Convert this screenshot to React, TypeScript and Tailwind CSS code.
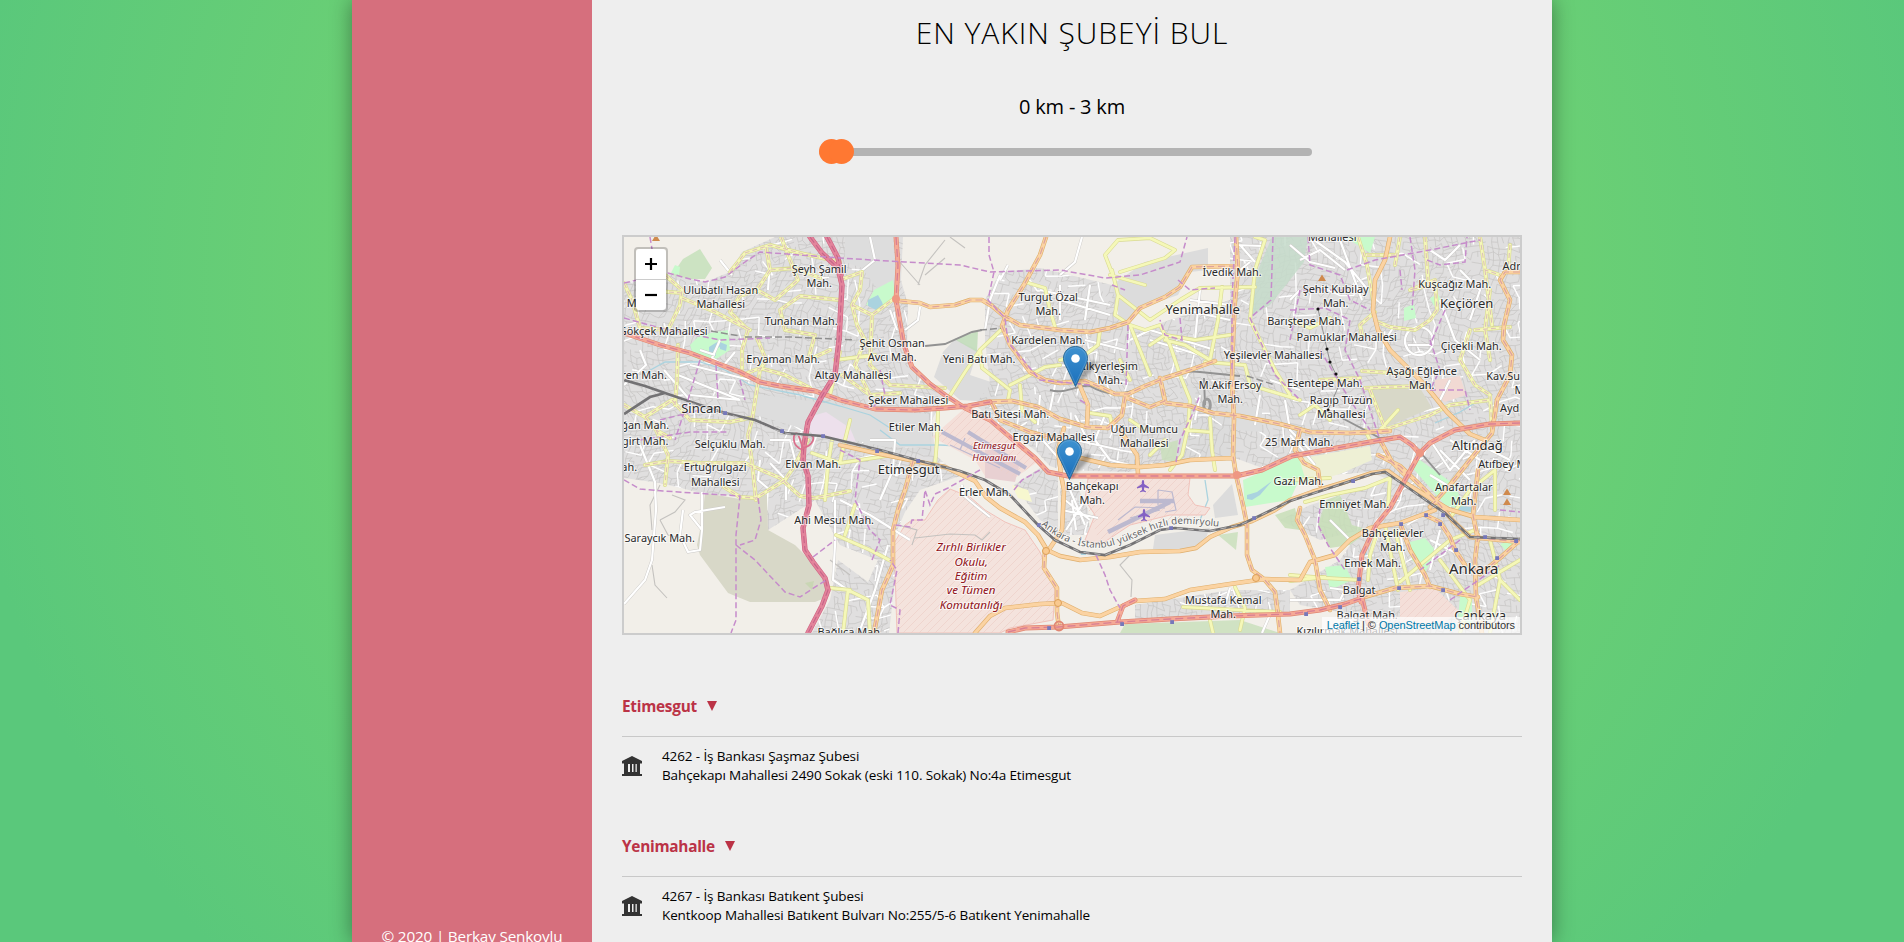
import React from "react";

type Label = [text: string, x: number, y: number, size?: number];

const labels: Label[] = [
  ["Şeyh Şamil", 820, 273], ["Mah.", 820, 287],
  ["Ulubatlı Hasan", 721.5, 294], ["Mahallesi", 721.5, 308],
  ["Tunahan Mah.", 802, 325], ["Gökçek Mahallesi", 664, 334.5],
  ["Eryaman Mah.", 784, 362.5], ["Altay Mahallesi", 854, 379],
  ["t Mah.", 637, 307], ["ren Mah.", 645, 378.5],
  ["Sincan", 702, 412.5, 13], ["ğan Mah.", 646, 428.5],
  ["girt Mah.", 646, 445], ["ah.", 630, 470.5],
  ["Selçuklu Mah.", 731, 448], ["Ertuğrulgazi", 716, 471], ["Mahallesi", 716, 485.5],
  ["Elvan Mah.", 814, 467.5], ["Ahi Mesut Mah.", 835, 524], ["Saraycık Mah.", 660.5, 541.5],
  ["Bağlıca Mah.", 851, 636],
  ["Şehit Osman", 893, 347], ["Avcı Mah.", 893, 361],
  ["Yeni Batı Mah.", 980, 363], ["Şeker Mahallesi", 909, 404],
  ["Etiler Mah.", 917, 431], ["Batı Sitesi Mah.", 1011, 417.5],
  ["Turgut Özal", 1049, 301], ["Mah.", 1049, 315],
  ["Kardelen Mah.", 1049, 344], ["Ergazi Mahallesi", 1054.5, 440.5],
  ["Erler Mah.", 986, 496], ["Etimesgut", 909.5, 474, 13],
  ["İvedik Mah.", 1233, 275.5], ["Yenimahalle", 1203.5, 313.5, 13],
  ["İlkyerleşim", 1111, 370], ["Mah.", 1111, 384],
  ["M.Akif Ersoy", 1231, 388.5], ["Mah.", 1231, 402.5],
  ["Uğur Mumcu", 1145, 432.5], ["Mahallesi", 1145, 446.5],
  ["25 Mart Mah.", 1300, 445.5], ["Bahçekapı", 1093, 489.5], ["Mah.", 1093, 503.5],
  ["Gazi Mah.", 1299.5, 484.5], ["Mustafa Kemal", 1224, 604], ["Mah.", 1224, 618],
  ["Mahallesi", 1333, 241], ["Şehit Kubilay", 1336.5, 293], ["Mah.", 1336.5, 307],
  ["Barıştepe Mah.", 1306.5, 324.5], ["Pamuklar Mahallesi", 1347.5, 340.5],
  ["Yeşilevler Mahallesi", 1274, 358.5], ["Esentepe Mah.", 1325.5, 386.5],
  ["Ragıp Tüzün", 1342, 403.5], ["Mahallesi", 1342, 417.5],
  ["Kuşcağız Mah.", 1455.5, 288], ["Keçiören", 1467.5, 308, 13],
  ["Adnan", 1520, 270], ["Çiçekli Mah.", 1472, 350],
  ["Aşağı Eğlence", 1422.5, 374.5], ["Mah.", 1422.5, 388.5],
  ["Kav.Subayevleri", 1527, 380], ["Mah.", 1528, 394], ["Aydınlık", 1521, 412],
  ["Altındağ", 1478, 449.5, 13], ["Atıfbey Mah.", 1511, 467.5],
  ["Anafartalar", 1464.5, 490.5], ["Mah.", 1464.5, 504.5],
  ["Emniyet Mah.", 1355, 507.5], ["Bahçelievler", 1393.5, 537], ["Mah.", 1393.5, 551],
  ["Emek Mah.", 1373.5, 567], ["Balgat", 1360, 594], ["Ankara", 1474.5, 574, 15],
  ["Balgat Mah.", 1368, 619], ["Çankaya", 1481, 620, 13], ["Kızılırmak Mahallesi", 1348, 635],
];

const redLabels: Label[] = [
  ["Zırhlı Birlikler", 972, 551, 11.6], ["Okulu,", 972, 565.5, 11.6], ["Eğitim", 972, 580, 11.6],
  ["ve Tümen", 972, 594, 11.6], ["Komutanlığı", 972, 608.5, 11.6],
  ["Etimesgut", 995, 449, 9.7], ["Havaalanı", 995, 460.5, 9.7],
];

const urban =
  "M624 283L668 274L705 282L730 272L742 252L775 237L903 237L901 280L908 305L907 345L916 372L945 395L932 420L935 455L960 476L920 490L905 512L893 540L896 570L889 633H812L830 600L838 560L868 582L878 560L840 545L815 500L768 530L766 497L705 494L660 483L624 478Z" +
  "M985 300L1000 272L1040 268L1112 285L1120 320L1140 330L1230 300V237L1270 237L1520 237V633L1345 633L1340 612L1300 605L1290 590L1340 560L1360 530L1320 540L1280 520L1310 505L1390 480L1370 472L1290 478L1235 458L1180 462L1130 472L1062 470L1050 466L1035 450L1000 425L975 405L990 385L985 340Z" +
  "M1060 488H1078L1088 510L1090 535H1062Z M1014 485L1040 468L1058 476L1058 530L1040 520Z M1135 605L1230 590L1290 590V614L1135 620Z";

const motorway = [
  "M810 237L822 253L838 268L842 285L839 340L835 375L822 396L808 422L804 445L803 460L808 476L809 505L803 528L805 550L813 562L825 578L828 590L822 606L808 633",
  "M827 237L838 258L841 275",
];

const trunk = [
  "M624 333L660 345L690 353L740 372L760 382L780 386L815 391L840 400L875 409L915 410L945 408L968 406L990 402",
  "M896 237L898 265L896 300L904 345L912 367L930 384L945 395L965 408L990 420L1010 437L1035 458L1048 472L1068 476H1236L1262 470L1292 456L1370 442L1400 437L1412 445L1420 454",
  "M1520 423L1490 424L1455 430L1430 443L1420 453L1405 480L1390 508L1376 525L1362 555L1358 590L1361 602",
  "M1008 632L1025 628L1058 627L1120 622L1170 619L1230 616L1290 614L1320 610L1345 604L1362 598L1366 615L1371 633",
  "M1117 622L1123 606L1135 600",
];

const primary = [
  "M840 445L880 454L915 461L945 467L975 481L986 497L1000 508L1025 522L1038 535L1047 550L1060 556L1080 560L1110 557L1140 552L1180 551L1196 548L1210 537L1232 527L1252 521L1275 510L1290 500L1312 492L1345 482L1372 473L1388 471L1402 481L1430 498L1448 509L1475 517L1520 520",
  "M1045 550L1044 568L1057 588L1057 612L1059 628",
  "M1064 428L1058 450L1061 475L1064 490L1062 530L1050 548",
  "M975 633L990 616L1005 608L1040 604L1062 603L1082 613L1100 616L1120 607L1135 601L1165 599L1190 590L1230 584L1265 579L1300 580L1310 562L1335 555L1350 540L1370 528L1400 523L1435 510",
  "M1236 237L1238 270L1235 300L1233 340L1232 380L1234 420L1233 455L1236 475L1243 505L1247 525L1247 555L1252 570L1264 579L1275 592L1278 615L1280 633",
  "M1236 266L1192 267L1180 287L1165 297L1140 308L1128 322L1110 328L1090 332L1060 330L1020 325L1004 316L992 306L982 300L970 300L955 305L930 307L920 303L900 301",
  "M1046 237L1040 255L1025 283L1008 310L1002 326L1010 345L1030 372L1045 380L1060 383L1085 381L1100 387L1115 394L1128 394L1145 386L1165 378L1190 370L1215 361",
  "M1080 386L1088 405L1087 425",
  "M1160 378L1165 401L1150 407L1125 397L1122 415L1108 428L1087 427L1060 419L1038 407L1012 401L985 402",
  "M992 403L1000 420L1030 432L1060 440",
  "M1165 403L1190 406L1213 413L1240 416L1280 424L1310 432L1350 433L1390 431",
  "M1060 457L1080 458L1110 465L1140 467L1165 465L1190 460L1232 458M1138 474L1137 455L1120 430",
  "M1390 237L1385 260L1375 280L1373 310L1378 330L1390 350L1410 370L1425 385L1447 412L1470 434L1485 440",
  "M1520 272L1505 272L1500 280L1510 300L1504 325L1503 340L1512 355L1510 375L1497 400L1492 433L1470 460L1450 485L1430 507",
  "M913 461L905 490L898 510L893 530L893 565L882 590L874 633",
  "M1300 508L1297 520L1305 535L1315 560L1320 590L1330 610",
  "M1300 430L1295 450L1304 463L1318 470L1320 485M1378 455L1400 466L1420 485L1440 505L1452 520L1470 537L1520 542",
  "M1400 523L1410 550L1425 575L1430 587M1361 598L1395 588L1430 586L1460 594L1478 597",
  "M1425 515L1440 522L1450 537L1455 550L1465 565M1478 535L1475 560L1476 597L1482 633",
  "M1520 540L1500 558L1480 574M1380 440L1392 462L1405 475M1478 470L1473 515L1478 540",
];

const secondary = [
  "M730 272L745 253L770 245L800 253L840 262M766 247L770 270L795 268L820 278M770 270L757 290L740 296L730 312L748 330M781 237L790 260L798 280L775 300L757 290",
  "M665 275L682 290L680 305L668 330L640 328L632 300L624 283M682 298L715 312L750 330M645 290L682 293",
  "M748 330L742 350L742 375M742 375L760 368L785 375L810 388M757 338L766 360L760 370L752 420L748 435M840 300L800 296L780 310L785 330L815 335L808 360L830 350",
  "M624 405L645 417L656 430L670 438M645 417L672 400L690 420L730 422L750 418M678 345L677 380L675 405M656 430L668 455L665 485",
  "M645 465L668 461L700 463L745 463L780 478L800 496L815 498L850 491M748 435L752 462L756 500M724 487L740 497L756 498L785 480L795 465L808 440",
  "M832 440L828 465L825 500M812 453L840 463L880 457L890 455M840 462L845 440L850 420",
  "M836 535L870 550L893 562M845 535L855 505M848 590L843 633M848 590L868 600L870 633M850 590L830 588",
  "M862 272L860 290L852 305L857 325L865 340L855 365L870 395M852 305L872 315L895 298M872 315L870 365L890 385L945 388M840 280L862 272M842 375L870 395L900 393",
  "M835 360L875 355M840 352L830 395M938 412L937 440L935 465M942 408L965 372L980 350L1003 328M980 350L982 368L1000 382L1010 390L1008 400M1010 385L1030 375L1045 367L1060 365M1020 385L1022 410L1035 422",
  "M1025 282L1045 288L1050 310L1055 327M1060 360L1085 355L1098 345L1100 330",
  "M1112 273L1105 255L1118 240L1150 238L1175 250L1165 258L1120 272M1110 275L1145 285M1112 270L1118 295L1115 315L1130 325L1145 330L1160 325L1170 345L1180 375L1190 400L1188 430M1118 295L1150 320L1180 300L1200 288L1255 287M1130 325L1150 375M1150 345L1165 335L1195 340L1230 335M1130 380L1120 360",
  "M1222 287L1218 320L1210 360L1185 345L1165 340M1205 362L1245 365L1250 385L1300 400M1255 237L1265 240L1255 270L1250 320L1275 370L1290 395",
  "M1290 320L1310 328L1330 318M1210 418L1212 450L1215 470M1190 418L1182 455L1170 470M1185 430L1210 432M1090 413L1110 416L1112 425M1130 420L1145 430M1150 455L1165 440",
  "M1358 237L1367 265L1373 300M1367 255L1395 255M1375 312L1360 325L1362 335M1378 322L1390 327L1415 330L1430 320L1437 310L1435 280L1410 290L1430 285M1425 237L1428 280M1400 237L1395 265",
  "M1480 237L1485 270L1500 275M1485 270L1492 325M1475 330L1510 327M1470 330L1460 360L1475 385L1490 395L1492 430M1490 290L1485 330L1490 360M1510 245L1508 270",
  "M1362 371L1410 374M1370 390L1385 428M1365 388L1420 386M1383 430L1430 415L1450 405L1490 400M1320 380L1360 378",
  "M1300 415L1315 405L1330 420M1365 430L1370 440M1290 480L1330 478M1305 502L1330 495L1365 488L1390 478L1388 508M1380 430L1398 410",
  "M1290 575L1325 578L1360 580M1400 582L1420 565L1450 540L1475 530M1368 580L1370 555L1378 530M1398 590L1385 525M1410 590L1395 530M1440 560L1470 600M1478 585L1520 560M1490 540L1500 580L1520 600M1470 600L1460 633M1500 580L1490 633M1452 515L1470 490L1495 470L1495 510",
  "M1183 607L1240 610L1280 612M1235 587L1245 608L1240 630M1210 620L1213 633M1290 581L1325 577",
];

const white = [
  "M720 340L712 358L724 365L735 352M700 350L715 355M690 365L750 380M678 375L740 400M690 395L740 400M664 370L690 400M640 350L646 365L624 385M720 260L732 275M770 262L768 290M785 245L795 255M640 445L655 482L656 510L652 560L645 580L624 604",
  "M656 510L655 490M683 510L680 535L688 552L700 550L702 530L690 515L695 512L725 507M702 530L702 492M760 460L758 480L770 490M770 440L790 440L795 460M786 500L786 480L770 463",
  "M835 500L835 545L833 580L848 590M840 500L870 515L910 540M870 440L895 440L893 470L880 500M888 545L875 590L860 630",
  "M870 237L875 260L860 272M890 310L897 330M920 307L918 320L905 330M1000 275L990 300L985 330M1008 265L1000 280M1060 285L1060 320M1040 290L1110 305M1060 300L1110 315M1090 285L1085 320M1082 237L1075 262L1060 275",
  "M1085 340L1125 350M1130 340L1150 330L1215 350M1150 340L1200 355M1190 300L1230 305M1185 310L1230 320M1200 290L1195 340M1240 245L1255 262M1240 270L1250 262M1235 245L1262 246",
  "M1105 415L1095 440L1110 460L1130 465M1075 415L1090 445M1075 440L1120 450M1260 395L1255 425M1200 395L1195 420M1285 400L1290 430L1310 450M1290 435L1315 465M1270 380L1300 390",
  "M1440 300L1455 340L1480 360M1395 325L1385 340L1370 338M1405 340A14 14 0 1 0 1433 342A14 14 0 1 0 1405 340M1408 345H1432M1450 380L1440 400M1450 440L1480 460M1440 450L1470 480M1430 475L1455 490M1430 440L1450 470L1475 440",
  "M1330 520L1350 540M1380 530L1365 570M1400 530L1405 565M1430 540L1460 555M1440 530L1430 570M1230 588L1225 605M1272 610L1262 633M1290 600L1340 600L1345 590L1330 588",
  "M962 485L963 495L975 505L990 517M1070 490L1085 525M1065 500L1090 520M1062 510L1098 518M1066 530L1085 500M1072 500L1076 530M1040 437L1060 460M1040 395L1038 425M1055 385L1050 410",
  "M1300 260L1320 250L1345 270M1310 237L1345 262L1368 290M1290 245L1310 262L1335 268M1340 240L1362 300M1300 290L1290 300M1430 250L1445 260L1460 245M1490 450L1510 460M1460 270L1480 290L1470 320",
];

const boundaries = [
  "M624 283L668 273L690 279L705 282L725 277L745 262L760 252L840 258L905 262L960 265L990 272L1060 270L1105 278L1140 275L1180 262L1187 237",
  "M650 237L653 255L660 270M624 318L660 328L720 340L770 338M989 237L989 255L994 272L988 300L1005 318L1008 342L1040 380L1090 385",
  "M624 480L640 489L663 491L740 496L736 535L736 620L731 633M736 545L755 560L785 592L800 597L826 580M758 498L761 520L755 540L740 545M813 557L835 540",
  "M980 470L948 488L935 494L930 505L925 490L922 520L912 520L910 527L895 525M898 633L900 610L890 605L897 570L890 560M1014 490L1022 480L1040 470",
  "M1096 555L1105 575L1110 590L1120 608M1235 237L1232 300L1232 370M1273 237L1271 300L1250 318L1262 345L1275 375L1300 400M1178 280L1190 290L1215 288M1176 462L1180 440L1192 415L1200 395",
  "M1308 237L1310 265L1340 275L1350 300L1370 310M1347 270L1375 260L1430 250L1480 240M1410 237L1415 270L1412 310M1427 260L1440 265L1465 262L1467 237M1290 310L1325 308L1350 320L1345 350L1360 380L1380 440",
  "M1400 270L1402 290M1430 340L1440 370L1430 390L1465 390L1470 410M1345 290L1300 290L1290 340M1320 350L1350 400L1370 430M1445 310L1430 345M1320 508L1318 525L1328 545L1345 570M1460 540L1420 570M1500 510L1520 512M1450 600L1500 565",
  "M1080 400L1088 405M1128 325L1126 385M1112 285L1125 290M1180 318L1182 340L1165 335L1160 320M700 360L688 400L675 440M716 365L718 400M740 380L745 400M660 420L700 410M640 440L690 432L728 432M880 370L885 395L872 408M840 450L860 460L855 500L870 530L880 540L872 560",
];

const orangeDashes = [1, 4, 5, 6, 8, 9, 10, 13, 14, 15, 16, 17, 18, 19];

const stations: [number, number][] = [
  [725, 413], [782, 431], [823, 436], [877, 451], [918, 461], [1039, 525], [1171, 528], [1254, 518],
  [1353, 481], [1401, 524], [1426, 515], [1440, 524], [1443, 515], [1456, 550], [1485, 537], [1497, 558],
  [1516, 541], [1359, 579], [1399, 588], [1443, 590], [1340, 607], [1306, 614], [1122, 624], [1172, 622], [1049, 628],
];

function makeRandom(seed: number) {
  let s = seed;
  return () => {
    s = (s * 16807) % 2147483647;
    return s / 2147483647;
  };
}

/** Irregular street mesh covering a rectangle; some segments are dropped so blocks vary. */
function mesh(seed: number, x0: number, y0: number, x1: number, y1: number, step: number, slant: number, keep: number) {
  const rnd = makeRandom(seed);
  const cols = Math.ceil((x1 - x0) / step) + 1;
  const rows = Math.ceil((y1 - y0) / step) + 1;
  const px: number[][] = [];
  const py: number[][] = [];
  for (let r = 0; r < rows; r++) {
    px.push([]);
    py.push([]);
    for (let c = 0; c < cols; c++) {
      const bend = Math.sin(c * 0.21 + r * 0.13 + seed) * step * 1.2;
      px[r].push(x0 + c * step + (rnd() - 0.5) * step * 0.6 + Math.sin(r * 0.2) * step * slant);
      py[r].push(y0 + r * step + (rnd() - 0.5) * step * 0.6 + bend);
    }
  }
  let d = "";
  for (let r = 0; r < rows - 1; r++) {
    for (let c = 0; c < cols - 1; c++) {
      const from = `M${px[r][c].toFixed(1)} ${py[r][c].toFixed(1)}`;
      if (rnd() < keep) d += `${from}L${px[r][c + 1].toFixed(1)} ${py[r][c + 1].toFixed(1)}`;
      if (rnd() < keep) d += `${from}L${px[r + 1][c].toFixed(1)} ${py[r + 1][c].toFixed(1)}`;
    }
  }
  return d;
}

const fineStreets = mesh(71, 600, 215, 1540, 650, 5.5, 2.5, 0.68);
const wideStreets = mesh(913, 600, 215, 1540, 650, 15, 1.5, 0.25);

function Roads({ paths, casing, fill, width }: { paths: string[]; casing: string; fill: string; width: number }) {
  const d = paths.join("");
  return (
    <g fill="none" strokeLinejoin="round" strokeLinecap="round">
      <path d={d} stroke={casing} strokeWidth={width} />
      <path d={d} stroke={fill} strokeWidth={width - 1.2} />
    </g>
  );
}

function MapLabels({ items, fill, italic }: { items: Label[]; fill: string; italic?: boolean }) {
  return (
    <g
      fontFamily='"Noto Sans", sans-serif'
      fontStyle={italic ? "italic" : "normal"}
      textAnchor="middle"
      fill={fill}
      stroke="#ffffff"
      strokeOpacity={0.65}
      strokeWidth={2.2}
      strokeLinejoin="round"
      paintOrder="stroke"
    >
      {items.map(([text, x, y, size], i) => (
        <text key={i} x={x - 0.8} y={y} fontSize={size ?? 10.9}>
          {text}
        </text>
      ))}
    </g>
  );
}

function Marker({ x, y }: { x: number; y: number }) {
  return (
    <g transform={`translate(${x - 12.5} ${y - 41})`}>
      <path d="M13 41L31 22Q38 14 29 15Q20 18 13 41Z" fill="#000" opacity="0.28" filter="url(#pinShadow)" />
      <path
        d="M12.5 0.5C5.6 0.5 0.5 5.8 0.5 12.3C0.5 16 2 18.6 4 22.2L12.5 40.5L21 22.2C23 18.6 24.5 16 24.5 12.3C24.5 5.8 19.4 0.5 12.5 0.5Z"
        fill="url(#pinFill)"
        stroke="#2e6c97"
      />
      <path d="M12.5 1.7C6.3 1.7 1.6 6.4 1.6 12.3C1.6 15.7 3.1 18.2 5 21.8L12.5 37.8L20 21.8C21.9 18.2 23.4 15.7 23.4 12.3C23.4 6.4 18.7 1.7 12.5 1.7Z" fill="none" stroke="#fff" strokeOpacity="0.15" />
      <circle cx="12.5" cy="12.5" r="4.3" fill="#fff" />
    </g>
  );
}

function CityMap() {
  return (
    <svg className="block h-full w-full" viewBox="624 237 896 396">
      <defs>
        <clipPath id="urbanClip"><path d={urban} /></clipPath>
        <pattern id="hatch" width="8" height="8" patternUnits="userSpaceOnUse">
          <path d="M-1 9L9 -1" stroke="#eccfc7" strokeWidth="0.7" />
        </pattern>
        <linearGradient id="pinFill" x1="0" y1="0" x2="0" y2="1">
          <stop offset="0" stopColor="#3f92d0" />
          <stop offset="1" stopColor="#1a6fbb" />
        </linearGradient>
        <filter id="pinShadow" x="-50%" y="-50%" width="200%" height="200%"><feGaussianBlur stdDeviation="1.6" /></filter>
        <path id="railName" d="M1041 525C1060 541 1075 547 1100 548C1130 544 1150 528 1170 525C1185 522 1200 525 1222 527" />
      </defs>

      <rect x="624" y="237" width="896" height="396" fill="#f2efe9" />
      <path d={urban} fill="#e0dfdf" />
      <g fill="#dcdcdc">
        <path d="M1112 285L1145 262L1208 248V270L1190 272L1178 295L1140 308L1128 322L1115 318Z" />
        <path d="M943 352L955 339L978 350L970 375L1000 385L996 402L960 400L934 377Z" />
        <path d="M755 392L830 400L930 412L932 455L885 452L800 432L752 418Z" />
        <path d="M1155 535L1210 528L1205 540L1192 550L1153 549ZM1213 505L1232 484L1238 515L1215 518Z" />
        <path d="M1180 385L1230 380V458L1185 462L1178 440L1195 410Z" />
      </g>
      <g clipPath="url(#urbanClip)" fill="none">
        <path d={fineStreets} stroke="#c6c4c3" strokeWidth="0.7" />
        <path d={wideStreets} stroke="#ffffff" strokeWidth="1.4" />
      </g>
      <path d="M756 394L832 404L928 414L930 448L885 447L800 428L755 415Z" fill="#dddddd" />
      <path d="M845 237H893L895 262L897 296L878 290L862 268L845 262Z" fill="#dddddd" />
      <path d="M1181 388H1196L1194 408L1184 404ZM1236 405L1262 408L1262 432L1236 430ZM1172 425H1186L1180 460H1172Z" fill="#dddddd" />

      <path d="M705 493L740 499L767 495L768 530L795 545L825 575L825 598L815 602L750 602L728 593L700 555L697 545L702 520Z" fill="#d8d8c8" />
      <path d="M1371 390L1420 388L1432 408L1386 427Z" fill="#d8d8c8" />
      <path d="M1292 460L1370 446L1372 460L1340 474L1300 485Z" fill="#eef0d5" />
      <path d="M1012 485L1028 490L1032 502L1018 498Z" fill="#f7f7cf" />
      <path d="M812 416L826 412L850 428L856 442L812 434L806 426Z" fill="#ede0ec" />

      <g fill="#aed1a0" opacity="0.85">
        <path d="M672 275L683 259L700 249L712 268L705 279L690 279Z" fill="#c5e0bb" />
        <path d="M954 339L978 331L977 352Z" fill="#c0dcb8" />
        <path d="M1272 237H1308L1304 262L1290 280L1270 305L1248 318L1258 270Z" fill="#c6dccb" />
        <path d="M1326 500L1340 495L1352 525L1370 530L1350 545L1330 548L1318 525Z" fill="#c8dfb8" />
        <path d="M1160 445L1178 440L1176 462L1162 460ZM1218 535L1238 532L1236 550ZM1125 624L1240 620L1280 633H1120Z" fill="#cadfbc" />
        <path d="M1275 515L1295 508L1300 530L1285 528Z" fill="#c8dfb8" />
        <path d="M805 583L814 581L812 590ZM897 567L907 564L900 575Z" fill="#c7d6b0" />
      </g>
      <g fill="#c8facc">
        <path d="M690 345L700 335L728 330L730 350L710 363L694 358Z" />
        <path d="M866 305L874 290L893 280L896 298L880 308Z" />
        <path d="M1243 480L1290 460L1300 478L1290 500L1245 507Z" />
        <path d="M1410 465L1420 460L1455 485L1465 510L1445 505Z" />
        <path d="M1404 308L1414 304L1416 318L1404 321Z" />
        <path d="M1410 542L1425 538L1437 552L1425 572L1412 560Z" />
        <path d="M1345 237L1375 237L1370 253ZM1290 460L1298 455L1305 478L1292 480Z" />
        <path d="M1460 595L1472 598L1472 625L1458 620ZM1325 567L1345 565L1352 580L1330 590Z" />
        <path d="M1430 298l8-4 4 8-8 4ZM1500 544l14-5 2 8-10 4ZM675 265l5 2-1 8-8-2Z" />
      </g>
      <g fill="#aad3df">
        <path d="M709 347l8-5 4 4-6 4 1 6-7-2ZM720 342l7 3-1 6-6-2Z" />
        <path d="M868 300l10-5 4 7 2 6-8 2-8-4Z" />
        <path d="M1247 495l10-3 15-11-12 14-8 5-5-1ZM1455 506l20 1v5l-20-1ZM1360 550l6-1 1 6-6 1ZM1080 551l6 0 0 4-5 0Z" />
      </g>
      <g fill="none" stroke="#aad3df" strokeWidth="1.3">
        <path d="M645 373L665 362L700 362L725 370L750 385L800 395L840 406L870 415L890 428M880 430L900 445L940 445L960 446" />
        <path d="M1435 423L1460 412L1475 403M1205 480L1208 500L1200 520" />
      </g>

      <g>
        <path d="M905 525L912 520L925 520L938 500L950 489L970 497L985 510L1005 522L1025 530L1040 552L1045 565L1055 590L1053 620L1010 628L1000 633H897L895 570L893 545Z" fill="#f4e3dd" stroke="#f0b8b0" strokeWidth="0.8" />
        <path d="M1088 478L1190 478L1188 495L1195 505L1210 508L1205 515L1170 515L1130 525L1100 545L1085 540L1095 515L1085 500Z" fill="#f4e1db" stroke="#f0b8b0" strokeWidth="0.8" />
        <path d="M932 437L965 408L1000 427L1040 460L1015 478L985 476L975 460Z" fill="#f4dfd9" />
        <path d="M985 440L1020 462L1015 482L985 478Z" fill="#e8d0d2" />
        <path d="M1400 592L1435 588L1460 612L1440 625L1400 622Z" fill="#f4dfd9" />
        <path d="M1435 380L1460 376L1466 395L1445 402L1435 395Z" fill="#f1d9d3" />
        <path d="M905 525L912 520L925 520L938 500L950 489L970 497L985 510L1005 522L1025 530L1040 552L1055 590L1053 620L1010 628L1000 633H897L893 545ZM1088 478H1190L1188 495L1205 515L1130 525L1100 545L1085 500ZM932 437L965 408L1040 460L1015 478ZM1400 592L1435 588L1460 612L1400 622Z" fill="url(#hatch)" />
      </g>
      <g stroke="#bcb9cf" fill="none">
        <path d="M1108 532L1170 502" strokeWidth="4.5" />
        <path d="M1140 501H1174" strokeWidth="4.5" />
        <path d="M1118 520L1135 507L1165 508M1158 490V505M1158 490L1172 492L1176 510L1165 512M1130 518L1160 510" strokeWidth="1.2" />
        <path d="M942 432L1020 474M968 432L1026 468" strokeWidth="4" />
        <path d="M950 445L1000 468M965 438L960 450" strokeWidth="1.3" />
      </g>
      <path d="M672 495L685 500L675 512L660 520M660 520L668 535L690 540M652 565L655 585L667 598M915 538L950 534L975 535L982 540L990 532M898 525L917 530L912 545M1130 555L1120 565L1132 580L1131 597M898 260L920 285M918 285L925 265L945 240M945 258L925 275M950 237L965 248M830 560L850 575M660 485L650 505L652 530" fill="none" stroke="#c4c2bf" strokeWidth="1.1" />

      <g fill="none" strokeLinejoin="round">
        <path d={white.join("")} stroke="#cbc9c7" strokeWidth="3" />
        <path d={white.join("")} stroke="#ffffff" strokeWidth="2.2" />
      </g>
      <Roads paths={secondary} casing="#d9da94" fill="#f5f8b8" width={3.9} />
      <path d={secondary.slice(0, 5).concat(secondary.slice(7, 8), secondary.slice(13, 16)).join("")} fill="none" stroke="#b566b8" strokeOpacity="0.38" strokeWidth="1.1" strokeDasharray="5 3" />

      <g fill="none">
        <path d="M711 331L740 336M745 337H790L855 340M980 330L1003 328M1247 376L1275 385" stroke="#8f8f8f" strokeWidth="1.5" strokeDasharray="7 3" />
        <path d="M925 346L945 344L972 332L982 330M1050 390C1065 395 1080 384 1090 386C1105 395 1120 397 1145 386C1170 376 1180 370 1200 372L1240 376M1342 418L1380 438L1400 437L1420 452L1440 475M1204 378L1205 405" stroke="#929292" strokeWidth="1.9" />
        <ellipse cx="1207" cy="405" rx="3.3" ry="6" stroke="#9b9b9b" strokeWidth="3" />
        <path d="M1318 309L1327 349L1330 362L1340 383L1328 410" stroke="#888" strokeWidth="0.9" />
      </g>

      <Roads paths={primary} casing="#dfae6c" fill="#fbd3a2" width={4.5} />
      <path d={orangeDashes.map((i) => primary[i]).join("")} fill="none" stroke="#b5669a" strokeOpacity="0.45" strokeWidth="1.2" strokeDasharray="7 4" />
      <Roads paths={trunk} casing="#e08673" fill="#f5a996" width={4.9} />
      <path d={trunk.join("")} fill="none" stroke="#bf5c92" strokeOpacity="0.55" strokeWidth="1.3" strokeDasharray="8 4" />
      <Roads paths={motorway} casing="#cf6483" fill="#e3849b" width={5.4} />
      <path d={motorway.join("")} fill="none" stroke="#b34f7d" strokeOpacity="0.6" strokeWidth="1.1" strokeDasharray="7 3" />
      <path d="M803 450C790 446 793 430 798 434L803 448C812 446 816 438 811 435" fill="none" stroke="#db6f8c" strokeWidth="1.8" />

      <g fill="none">
        <path d="M624 380L645 386L665 393L700 405L725 413L755 420L785 433L822 436L880 450L920 461L960 471L985 480L1010 495L1038 525L1055 540L1080 552L1105 555L1130 545L1160 530L1175 528L1210 531L1240 525L1255 518L1290 501L1372 474L1385 472L1400 482L1430 503L1445 513L1470 537L1520 539M665 393L650 397L624 414" stroke="#737274" strokeWidth="2.7" />
        <path d="M680 400L725 413L785 433L880 450L960 471L985 480L1010 495L1038 525L1055 540L1080 552L1105 555L1130 545L1160 530L1175 528L1210 531L1240 525L1255 518L1290 501L1372 474L1385 472L1400 482L1430 503L1445 513L1470 537L1520 539" stroke="#cccaca" strokeWidth="0.8" strokeDasharray="6 5" />
      </g>
      <g fill="none" stroke="#c68ccb" strokeWidth="1.5" strokeDasharray="6 3">
        <path d={boundaries.join("")} />
      </g>
      <g fill="#f9c98f" stroke="#dda057" strokeWidth="1">
        <circle cx="1046" cy="551" r="3.5" /><circle cx="1058" cy="603" r="3.5" /><circle cx="1256" cy="578" r="3.5" />
      </g>
      <circle cx="1059" cy="626" r="4.5" fill="none" stroke="#e08673" strokeWidth="1.8" />
      <circle cx="1237" cy="475" r="4" fill="#ee9783" /><circle cx="1420" cy="453" r="4" fill="#ee9783" /><circle cx="896" cy="299" r="4" fill="#ee9783" />

      {stations.map(([x, y], i) => <rect key={i} x={x - 1.8} y={y - 1.8} width="3.8" height="3.8" fill="#7678ba" />)}
      {[[1318, 309], [1327, 349], [1330, 362], [1336, 374], [1328, 410]].map(([x, y], i) => <circle key={i} cx={x} cy={y} r="1.6" fill="#111" />)}
      {[[1322, 276], [1507, 490], [1507, 500], [656, 236]].map(([x, y], i) => <path key={i} d={`M${x - 4} ${y + 5}L${x} ${y - 1.5}L${x + 4} ${y + 5}Z`} fill="#cf8a4d" />)}
      {[[1143, 486], [1144, 515]].map(([x, y], i) => (
        <path key={i} transform={`translate(${x} ${y})`} d="M0-6C1.2-6 1.2-4 1.2-2L6 1.2V2.6L1.2 1.2L1 4L3 5.4V6.2L0 5.5L-3 6.2V5.4L-1 4L-1.2 1.2L-6 2.6V1.2L-1.2-2C-1.2-4-1.2-6 0-6Z" fill="#8461c4" />
      ))}

      <text fontFamily='"Noto Sans", sans-serif' fontSize="9.8" fill="#666" stroke="#fff" strokeOpacity="0.6" strokeWidth="1.6" paintOrder="stroke">
        <textPath href="#railName" textLength="188">Ankara - İstanbul yüksek hızlı demiryolu</textPath>
      </text>
      <MapLabels items={labels} fill="#2b2b2b" />
      <MapLabels items={redLabels} fill="#8f1018" italic />
      <Marker x={1075.5} y={387} />
      <Marker x={1069.5} y={480} />
    </svg>
  );
}

function BankIcon() {
  return (
    <svg className="block size-5 shrink-0" viewBox="0 0 20 20" fill="#333">
      <path fillRule="evenodd" d="M10 0L20 5V7.5H18V18H20V20H0V18H2V7.5H0V5ZM6 8V16H8V8ZM10 8V16H11.5V8ZM13.5 8V16H14.8V8Z" />
    </svg>
  );
}

function Branch({ district, name, address }: { district: string; name: string; address: string }) {
  return (
    <section className="h-[140px]">
      <h2 className="flex h-[41px] items-start border-b border-[#c8c8c8] text-[15.4px] leading-[22px] font-bold text-[#bb3346]">
        <span className="tracking-[-0.27px]">{district}</span>
        <svg className="mt-[5px] ml-2.5 h-2.5 w-2.5" viewBox="0 0 10 10" fill="currentColor"><path d="M0 0H10L5 10Z" /></svg>
      </h2>
      <div className="flex items-center gap-5 pt-2.5 text-[13.5px] leading-[19px] tracking-[-0.12px] text-black">
        <BankIcon />
        <div>
          <p>{name}</p>
          <p>{address}</p>
        </div>
      </div>
    </section>
  );
}

export default function App() {
  return (
    <div className="flex h-[942px] justify-center overflow-hidden bg-[radial-gradient(circle_at_50%_30%,#6cd074_50%,#5ac87b_86%)] font-['Open_Sans','Noto_Sans',sans-serif]">
      <div className="flex h-full w-[1200px] bg-[#eee] shadow-[0_0_20px_rgba(0,0,0,0.4)]">
        <aside className="flex w-60 shrink-0 flex-col justify-end bg-[#d66f7d]">
          <footer className="-mb-1.5 text-center text-[15.3px] leading-6 tracking-[-0.19px] whitespace-nowrap text-white">© 2020 | Berkay Senkoylu</footer>
        </aside>
        <main className="flex min-w-0 grow flex-col px-[30px]">
          <h1 className="mt-[13px] shrink-0 text-center text-[30px] leading-10 font-light tracking-[0.95px] text-black">EN YAKIN ŞUBEYİ BUL</h1>
          <p className="mt-10 shrink-0 text-center text-[20px] leading-7 tracking-[-0.2px] text-black">0 km - 3 km</p>
          <div className="mt-[18px] ml-[197px] flex h-[25px] w-[493px] shrink-0 items-center">
            <div className="relative flex h-2 w-full items-center rounded-full bg-[#b3b3b3]">
              <span className="absolute left-0 size-[25px] rounded-full bg-[#ff7832]" />
              <span className="absolute left-2.5 size-[25px] rounded-full bg-[#ff7832]" />
            </div>
          </div>
          <div className="relative mt-[71px] h-[400px] shrink-0 overflow-hidden border-2 border-[#ccc]">
            <CityMap />
            <div className="absolute top-2.5 left-2.5 flex w-[34px] flex-col rounded border-2 border-black/20 bg-clip-padding">
              <button className="flex h-[31px] items-center justify-center rounded-t-sm border-b border-[#ccc] bg-white" aria-label="+">
                <svg width="12" height="12" viewBox="0 0 12 12" stroke="#000" strokeWidth="2.2"><path d="M6 0V12M0 6H12" /></svg>
              </button>
              <button className="flex h-[30px] items-center justify-center rounded-b-sm bg-white" aria-label="−">
                <svg width="12" height="12" viewBox="0 0 12 12" stroke="#000" strokeWidth="2.2"><path d="M0 6H12" /></svg>
              </button>
            </div>
            <div className="absolute right-0 bottom-0 bg-white/70 px-[5px] font-['Liberation_Sans',sans-serif] text-[11px] leading-4 tracking-[-0.08px] text-[#333]">
              <span className="text-[#0078a8]">Leaflet</span> | © <span className="text-[#0078a8]">OpenStreetMap</span> contributors
            </div>
          </div>
          <div className="mt-[61px] shrink-0">
            <Branch district="Etimesgut" name="4262 - İş Bankası Şaşmaz Şubesi" address="Bahçekapı Mahallesi 2490 Sokak (eski 110. Sokak) No:4a Etimesgut" />
            <Branch district="Yenimahalle" name="4267 - İş Bankası Batıkent Şubesi" address="Kentkoop Mahallesi Batıkent Bulvarı No:255/5-6 Batıkent Yenimahalle" />
          </div>
        </main>
      </div>
    </div>
  );
}
